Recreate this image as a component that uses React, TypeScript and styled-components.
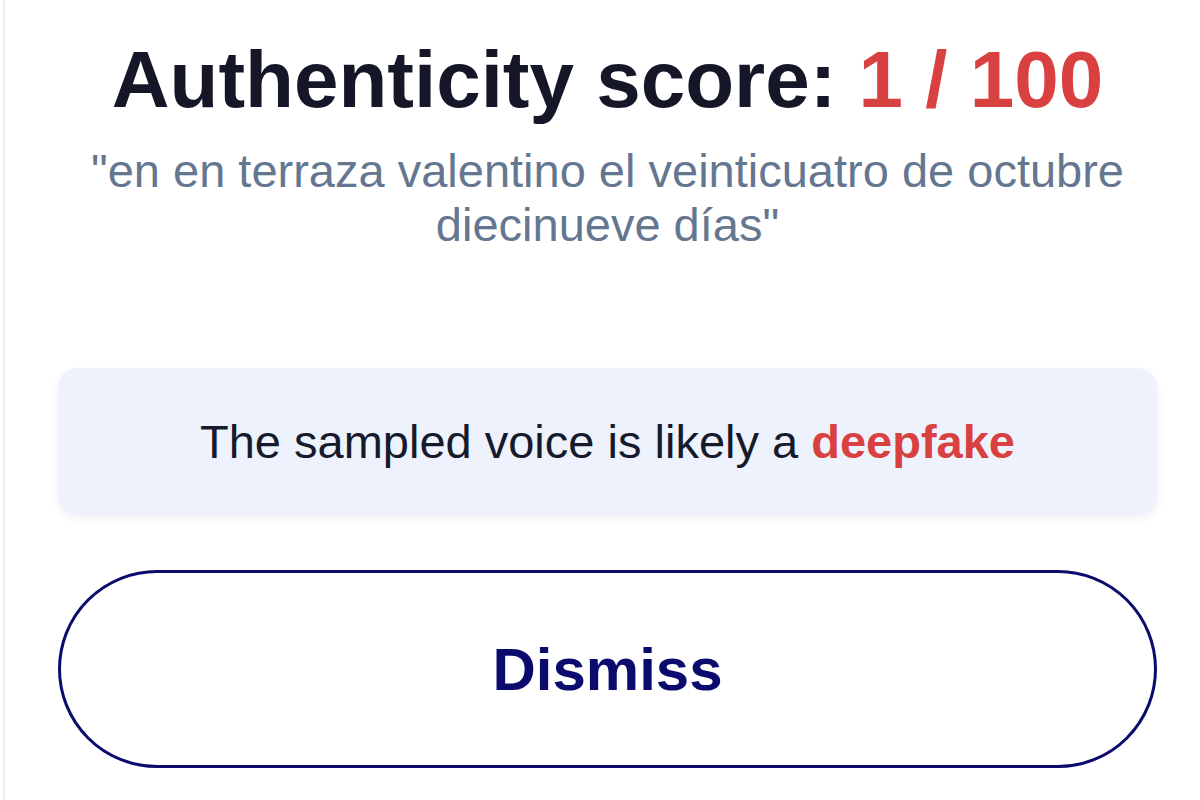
import { FC } from 'react';
import styled, { createGlobalStyle } from 'styled-components';

const GlobalStyle = createGlobalStyle`
  html, body {
    margin: 0;
    padding: 0;
    background: #ffffff;
  }
  body {
    font-family: 'Liberation Sans', Arial, Helvetica, sans-serif;
  }
`;

const Page = styled.div`
  min-height: 800px;
  box-sizing: border-box;
  margin-left: 3px;
  border-left: 2px solid #e8eef6;
  padding: 34px 43px 0 53px;
`;

const Column = styled.div`
  display: flex;
  flex-direction: column;
  align-items: stretch;
`;

const Title = styled.h1`
  margin: 0;
  font-size: 80px;
  line-height: 92px;
  font-weight: 700;
  color: #151729;
  text-align: center;
`;

const Score = styled.span`
  color: #d94141;
`;

const Transcript = styled.p`
  margin: 18px 0 0;
  font-size: 47px;
  line-height: 54px;
  color: #657790;
  text-align: center;
`;

const Verdict = styled.div`
  margin-top: 116px;
  padding: 46px 20px;
  border-radius: 20px;
  background: #edf2fc;
  box-shadow: 0 4px 10px rgba(30, 40, 80, 0.06);
  font-size: 47px;
  line-height: 55px;
  color: #161a2b;
  text-align: center;
`;

const Highlight = styled.strong`
  color: #d94141;
  font-weight: 700;
`;

const DismissButton = styled.button`
  margin-top: 55px;
  height: 198px;
  display: flex;
  align-items: center;
  justify-content: center;
  border: 3px solid #0b0b6e;
  border-radius: 999px;
  background: #ffffff;
  font-family: inherit;
  font-size: 60px;
  font-weight: 700;
  color: #0b0b6e;
  cursor: pointer;
`;

type Props = {
  score: number;
  max: number;
  transcript: string;
};

const Result: FC<Props> = ({ score, max, transcript }) => (
  <Column>
    <Title>
      Authenticity score: <Score>{`${score} / ${max}`}</Score>
    </Title>
    <Transcript>{`"${transcript}"`}</Transcript>
    <Verdict>
      The sampled voice is likely a <Highlight>deepfake</Highlight>
    </Verdict>
    <DismissButton>Dismiss</DismissButton>
  </Column>
);

const App: FC = () => (
  <>
    <GlobalStyle />
    <Page>
      <Result
        score={1}
        max={100}
        transcript="en en terraza valentino el veinticuatro de octubre diecinueve días"
      />
    </Page>
  </>
);

export default App;
